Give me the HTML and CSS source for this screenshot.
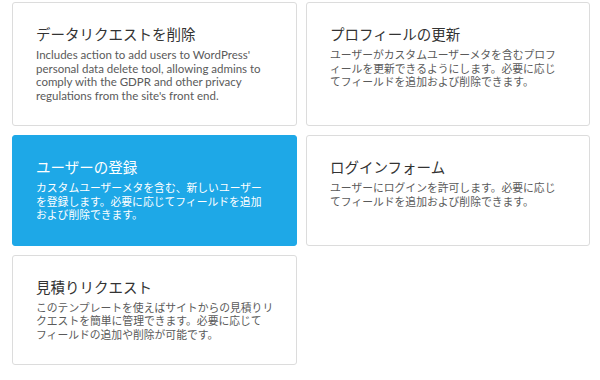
FILE: index.html
```html
<!DOCTYPE html>
<html lang="ja">
<head>
<meta charset="utf-8">
<title>Templates</title>
<link rel="stylesheet" href="styles.css">
</head>
<body>
<div class="grid">
  <div class="card">
    <h3 class="card-title">データリクエストを削除</h3>
    <p class="card-text latin">Includes action to add users to WordPress'<br>personal data delete tool, allowing admins to<br>comply with the GDPR and other privacy<br>regulations from the site's front end.</p>
  </div>
  <div class="card">
    <h3 class="card-title">プロフィールの更新</h3>
    <p class="card-text">ユーザーがカスタムユーザーメタを含むプロフ<br>ィールを更新できるようにします。必要に応じ<br>てフィールドを追加および削除できます。</p>
  </div>
  <div class="card card-active">
    <h3 class="card-title">ユーザーの登録</h3>
    <p class="card-text">カスタムユーザーメタを含む、新しいユーザー<br>を登録します。必要に応じてフィールドを追加<br>および削除できます。</p>
  </div>
  <div class="card">
    <h3 class="card-title">ログインフォーム</h3>
    <p class="card-text">ユーザーにログインを許可します。必要に応じ<br>てフィールドを追加および削除できます。</p>
  </div>
  <div class="card">
    <h3 class="card-title">見積りリクエスト</h3>
    <p class="card-text">このテンプレートを使えばサイトからの見積りリ<br>クエストを簡単に管理できます。必要に応じて<br>フィールドの追加や削除が可能です。</p>
  </div>
</div>
</body>
</html>
```

FILE: styles.css
```css
html, body {
  margin: 0;
  padding: 0;
  background: #ffffff;
}

body {
  font-family: Lato, "Noto Sans CJK JP", sans-serif;
  color: #555555;
}

.grid {
  display: grid;
  grid-template-columns: 285px 284px;
  column-gap: 9px;
  row-gap: 9px;
  padding: 2px 0 0 12px;
}

.card {
  box-sizing: border-box;
  background: #ffffff;
  border: 1px solid #dcdcdc;
  border-radius: 3px;
  padding: 22px 20px 23px 23px;
}

.card-title {
  margin: 0 0 3px 0;
  font-size: 14.5px;
  line-height: 20px;
  font-weight: 400;
  color: #333333;
  white-space: nowrap;
}

.card-text {
  margin: 0;
  font-size: 10.8px;
  line-height: 13.5px;
  color: #5a5a5a;
  white-space: nowrap;
}

.card-text.latin {
  font-size: 11.5px;
}

.card-active {
  background: #1ea8e7;
  border-color: #1ea8e7;
}

.card-active .card-title,
.card-active .card-text {
  color: #ffffff;
}
```
